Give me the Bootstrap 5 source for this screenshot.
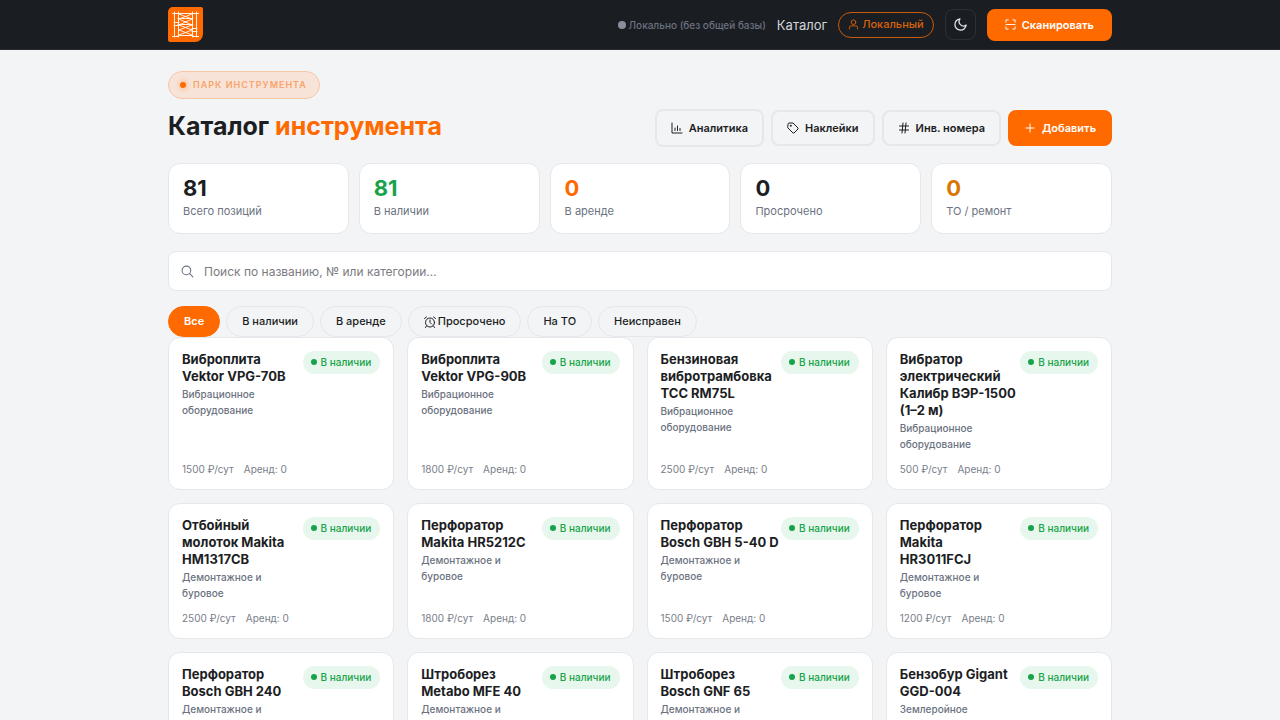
<!DOCTYPE html>
<html lang="ru">
<head>
<meta charset="utf-8">
<meta name="viewport" content="width=device-width, initial-scale=1">
<title>Каталог инструмента</title>
<link href="https://cdn.jsdelivr.net/npm/bootstrap@5.3.0/dist/css/bootstrap.min.css" rel="stylesheet">
<style>
:root{--accent:#ff6a00;--ink:#1c1e24;--muted-ink:#6b7280;--line:#e5e7eb}
body{font-family:Inter,"Noto Sans",sans-serif;background:#f3f4f6;color:var(--ink);font-size:12px;line-height:16px}
svg{flex:none;fill:none;stroke:currentColor;stroke-width:2;stroke-linecap:round;stroke-linejoin:round}
.wrap{max-width:968px}
.topbar{background:#1a1d21;border-bottom:1px solid #2a2d33;height:50px}
.topnav{gap:11px}
.logo{width:35px;height:35px;background:var(--accent);border-radius:5px 2px 8px 2px;color:#fff}
.logo svg{stroke-width:1;opacity:.9}
.sync{color:#6b7280;font-size:10px;font-weight:500;gap:3px}
.sync i{width:8px;height:8px;background:#8b8f9c}
.toplink{color:#d1d5db;font-size:13px}
.user{border:1px solid #c75b0c;color:#d9630c;font-size:11px;height:26px;padding:0 9px;font-weight:500;gap:3px}
.theme{width:31px;height:31px;border:1px solid #2d3037;border-radius:8px;color:#e5e7eb}
.act{--bs-btn-font-size:11px;--bs-btn-line-height:16px;--bs-btn-font-weight:600;--bs-btn-border-radius:8px;--bs-btn-border-width:2px;--bs-btn-padding-y:8px;--bs-btn-padding-x:14px;--bs-btn-color:var(--ink);--bs-btn-border-color:var(--line);--bs-btn-hover-border-color:#d1d5db;gap:6px}
.act-main{--bs-btn-color:#fff;--bs-btn-bg:var(--accent);--bs-btn-border-color:var(--accent);--bs-btn-hover-color:#fff;--bs-btn-hover-bg:#e55f00;--bs-btn-hover-border-color:#e55f00}
.act-scan{--bs-btn-padding-y:6px;--bs-btn-padding-x:16px}
.act-tall{--bs-btn-padding-y:9px}
main{padding-top:21px}
.eyebrow{height:28px;padding:0 12px 0 11px;border:1px solid #f9c7a4;background:#f7e3d8;color:#f9a46a;font-size:9px;font-weight:600;letter-spacing:1px;gap:7px}
.eyebrow i{width:6px;height:6px;background:var(--accent);box-shadow:0 0 4px 2px #fbc9a6}
.titlebar{margin-top:10px;margin-bottom:16px}
.actions{gap:7px}
h1{font-size:25px;line-height:32px;font-weight:700}
.accent{color:var(--accent)}
.ok{color:#16a34a}
.warn{color:#d97706}
.stats{display:grid;grid-template-columns:repeat(5,1fr);gap:10px}
.panel{background:#fff;border:1px solid var(--line);border-radius:12px}
.stat{padding:11px 14px 14px}
.stat b{display:block;font-size:22px;line-height:26px;font-weight:700}
.stat span{display:block;font-size:11px;line-height:16px;color:var(--muted-ink);margin-top:2px}
.search{height:40px;border-radius:8px;padding:0 12px;gap:10px;color:var(--muted-ink);margin-top:17px;margin-bottom:15px}
.search input{background:none;font-size:12px;padding:1px 0 0;color:var(--ink)}
.search input::placeholder{color:#7b7b7f}
.chips{gap:6px}
.chip{height:31px;padding:0 15px;border:1px solid var(--line);background:#f3f4f6;color:var(--ink);font-size:11px;font-weight:500;gap:2px}
.chip.on{background:var(--accent);border-color:var(--accent);color:#fff;font-weight:600}
.tools{display:grid;grid-template-columns:repeat(4,minmax(0,1fr));gap:13px}
.tool{padding:13px 13px 12px;display:flex;flex-direction:column}
.tool h2{font-size:13px;line-height:17px;font-weight:700;margin:0 0 1px}
.tool p{font-size:10px;font-weight:500;color:var(--muted-ink);margin:0 0 9px;max-width:88px}
.tool footer{margin-top:auto;display:flex;gap:10px;font-size:10px;color:#787e8a}
.state{background:#e8f7ed;color:#16a34a;font-size:10px;font-weight:500;line-height:14px;padding:4px 9px 5px 8px;gap:4px}
.state::before{content:"";width:6px;height:6px;border-radius:50%;background:#16a34a}
</style>
</head>
<body>
<header class="topbar d-flex align-items-center">
 <div class="container wrap d-flex align-items-center">
  <a href="#" class="logo d-flex align-items-center justify-content-center me-auto" aria-label="Главная">
   <svg width="27" height="27" viewBox="0 0 27 27"><path d="M2.500 1v25M6.500 1v25M20.500 1v25M24.500 1v25M0 2.500h27M0 25.500h6M21 25.500h6M6 7.500h15M6 13.500h15M6 24.500h15M7 3l13 5M20 3L7 8M7 8l13 6M20 8L7 14M7 14l13 5M20 14L7 19M7 19l13 5M20 19L7 24M2 11.500h5M2 14.500h5M20 17.500h5M20 20.500h5"/></svg>
  </a>
  <div class="topnav d-flex align-items-center">
   <span class="sync d-flex align-items-center"><i class="rounded-circle"></i>Локально (без общей базы)</span>
   <a href="#" class="toplink text-decoration-none">Каталог</a>
   <button class="user btn rounded-pill d-flex align-items-center"><svg width="11" height="11" viewBox="0 0 24 24"><circle cx="12" cy="7" r="5"/><path d="M3 22v-3a4 4 0 0 1 4-4h10a4 4 0 0 1 4 4v3"/></svg>Локальный</button>
   <button class="theme btn p-0 d-flex align-items-center justify-content-center" aria-label="Тема"><svg width="15" height="15" viewBox="0 0 24 24"><path d="M21 12.800A9 9 0 1 1 11.200 3a7 7 0 0 0 9.800 9.800z"/></svg></button>
   <button class="act act-main act-scan btn d-flex align-items-center"><svg width="11" height="11" viewBox="0 0 24 24"><path d="M2 7V2h5M17 2h5v5M22 17v5h-5M7 22H2v-5M2 12h20"/></svg>Сканировать</button>
  </div>
 </div>
</header>
<main class="container wrap">
 <div class="eyebrow rounded-pill d-inline-flex align-items-center"><i class="rounded-circle"></i>ПАРК ИНСТРУМЕНТА</div>
 <div class="titlebar d-flex align-items-center justify-content-between">
  <h1 class="m-0 pb-1">Каталог <span class="accent">инструмента</span></h1>
  <div class="actions d-flex align-items-center">
   <button class="act act-tall btn d-flex align-items-center"><svg width="12" height="12" viewBox="0 0 24 24"><path d="M2 2v20h20M8 17v-5M13 17V8M18 17v-4"/></svg>Аналитика</button>
   <button class="act btn d-flex align-items-center"><svg width="12" height="12" viewBox="0 0 24 24"><path d="M2 4a2 2 0 0 1 2-2h8l10 10a2 2 0 0 1 0 2l-8 8a2 2 0 0 1-2 0L2 12z"/><circle cx="7.500" cy="7.500" r="1"/></svg>Наклейки</button>
   <button class="act btn d-flex align-items-center"><svg width="12" height="12" viewBox="0 0 24 24"><path d="M3 8h18M3 16h18M10 2L8 22M16 2l-2 20"/></svg>Инв. номера</button>
   <button class="act act-main btn d-flex align-items-center"><svg width="12" height="12" viewBox="0 0 24 24"><path d="M12 4v16M4 12h16"/></svg>Добавить</button>
  </div>
 </div>
 <section class="stats">
  <div class="panel stat"><b>81</b><span>Всего позиций</span></div>
  <div class="panel stat"><b class="ok">81</b><span>В наличии</span></div>
  <div class="panel stat"><b class="accent">0</b><span>В аренде</span></div>
  <div class="panel stat"><b>0</b><span>Просрочено</span></div>
  <div class="panel stat"><b class="warn">0</b><span>ТО / ремонт</span></div>
 </section>
 <label class="panel search d-flex align-items-center"><svg width="13" height="13" viewBox="0 0 24 24"><circle cx="10" cy="10" r="8"/><path d="M16 16l6 6"/></svg><input class="form-control border-0 shadow-none" type="search" aria-label="Поиск" placeholder="Поиск по названию, № или категории…"></label>
 <div class="chips d-flex flex-wrap">
  <button class="chip on btn rounded-pill d-flex align-items-center">Все</button>
  <button class="chip btn rounded-pill d-flex align-items-center">В наличии</button>
  <button class="chip btn rounded-pill d-flex align-items-center">В аренде</button>
  <button class="chip btn rounded-pill d-flex align-items-center"><svg width="12" height="12" viewBox="0 0 24 24"><circle cx="12" cy="13" r="9"/><path d="M12 8v5l3 3M1 5l4-3M23 5l-4-3M5 20l-2 3M19 20l2 3"/></svg>Просрочено</button>
  <button class="chip btn rounded-pill d-flex align-items-center">На ТО</button>
  <button class="chip btn rounded-pill d-flex align-items-center">Неисправен</button>
 </div>
 <section class="tools">
  <article class="panel tool"><div class="d-flex justify-content-between align-items-start"><div><h2>Виброплита<br>Vektor VPG-70B</h2><p>Вибрационное оборудование</p></div><span class="state rounded-pill d-flex align-items-center text-nowrap">В наличии</span></div><footer><span>1500 ₽/сут</span><span>Аренд: 0</span></footer></article>
  <article class="panel tool"><div class="d-flex justify-content-between align-items-start"><div><h2>Виброплита<br>Vektor VPG-90B</h2><p>Вибрационное оборудование</p></div><span class="state rounded-pill d-flex align-items-center text-nowrap">В наличии</span></div><footer><span>1800 ₽/сут</span><span>Аренд: 0</span></footer></article>
  <article class="panel tool"><div class="d-flex justify-content-between align-items-start"><div><h2>Бензиновая<br>вибротрамбовка<br>ТСС RM75L</h2><p>Вибрационное оборудование</p></div><span class="state rounded-pill d-flex align-items-center text-nowrap">В наличии</span></div><footer><span>2500 ₽/сут</span><span>Аренд: 0</span></footer></article>
  <article class="panel tool"><div class="d-flex justify-content-between align-items-start"><div><h2>Вибратор<br>электрический<br>Калибр ВЭР-1500<br>(1–2 м)</h2><p>Вибрационное оборудование</p></div><span class="state rounded-pill d-flex align-items-center text-nowrap">В наличии</span></div><footer><span>500 ₽/сут</span><span>Аренд: 0</span></footer></article>
  <article class="panel tool"><div class="d-flex justify-content-between align-items-start"><div><h2>Отбойный<br>молоток Makita<br>HM1317CB</h2><p>Демонтажное и буровое</p></div><span class="state rounded-pill d-flex align-items-center text-nowrap">В наличии</span></div><footer><span>2500 ₽/сут</span><span>Аренд: 0</span></footer></article>
  <article class="panel tool"><div class="d-flex justify-content-between align-items-start"><div><h2>Перфоратор<br>Makita HR5212C</h2><p>Демонтажное и буровое</p></div><span class="state rounded-pill d-flex align-items-center text-nowrap">В наличии</span></div><footer><span>1800 ₽/сут</span><span>Аренд: 0</span></footer></article>
  <article class="panel tool"><div class="d-flex justify-content-between align-items-start"><div><h2>Перфоратор<br>Bosch GBH 5-40 D</h2><p>Демонтажное и буровое</p></div><span class="state rounded-pill d-flex align-items-center text-nowrap">В наличии</span></div><footer><span>1500 ₽/сут</span><span>Аренд: 0</span></footer></article>
  <article class="panel tool"><div class="d-flex justify-content-between align-items-start"><div><h2>Перфоратор<br>Makita<br>HR3011FCJ</h2><p>Демонтажное и буровое</p></div><span class="state rounded-pill d-flex align-items-center text-nowrap">В наличии</span></div><footer><span>1200 ₽/сут</span><span>Аренд: 0</span></footer></article>
  <article class="panel tool"><div class="d-flex justify-content-between align-items-start"><div><h2>Перфоратор<br>Bosch GBH 240</h2><p>Демонтажное и буровое</p></div><span class="state rounded-pill d-flex align-items-center text-nowrap">В наличии</span></div></article>
  <article class="panel tool"><div class="d-flex justify-content-between align-items-start"><div><h2>Штроборез<br>Metabo MFE 40</h2><p>Демонтажное и буровое</p></div><span class="state rounded-pill d-flex align-items-center text-nowrap">В наличии</span></div></article>
  <article class="panel tool"><div class="d-flex justify-content-between align-items-start"><div><h2>Штроборез<br>Bosch GNF 65</h2><p>Демонтажное и буровое</p></div><span class="state rounded-pill d-flex align-items-center text-nowrap">В наличии</span></div></article>
  <article class="panel tool"><div class="d-flex justify-content-between align-items-start"><div><h2>Бензобур Gigant<br>GGD-004</h2><p>Землеройное</p></div><span class="state rounded-pill d-flex align-items-center text-nowrap">В наличии</span></div></article>
 </section>
</main>
<script src="https://cdn.jsdelivr.net/npm/bootstrap@5.3.0/dist/js/bootstrap.bundle.min.js"></script>
</body>
</html>
